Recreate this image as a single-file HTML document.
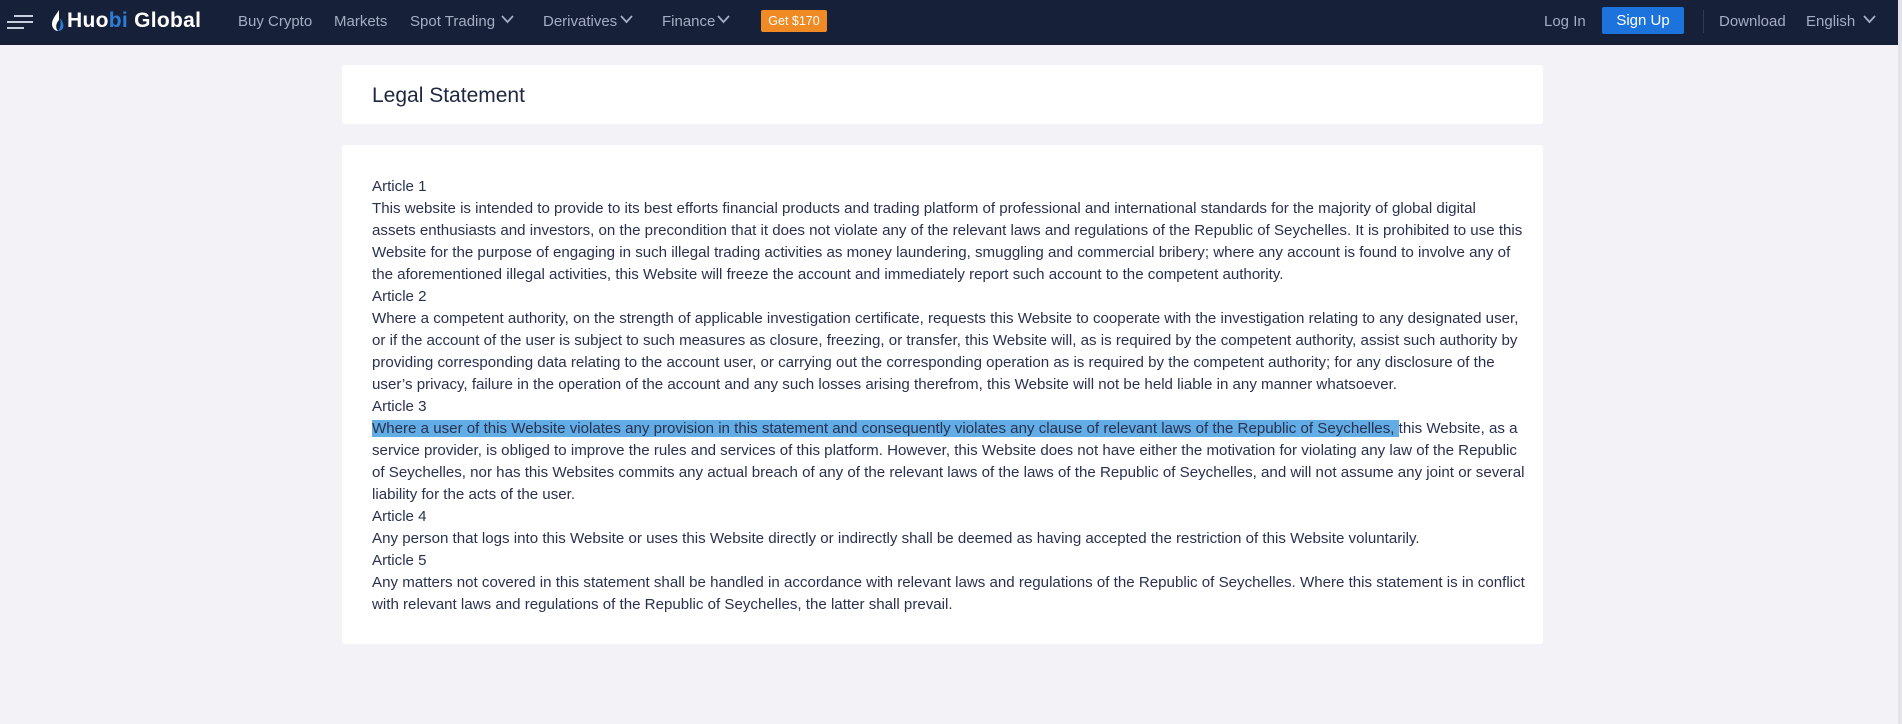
<!DOCTYPE html>
<html><head><meta charset="utf-8"><style>
*{margin:0;padding:0;box-sizing:border-box}
body{width:1902px;height:724px;background:#f2f2f7;font-family:"Liberation Sans",Arial,sans-serif;position:relative;overflow:hidden}
.nav{position:absolute;left:0;top:0;width:1898px;height:45px;background:#172039}
.sb{position:absolute;right:0;top:0;width:4px;height:724px;background:#e4e4e8}
.n{position:absolute;top:13px;font-size:15px;color:#a4adc2;white-space:nowrap}
.chev{position:absolute;top:15px}
.card{position:absolute;left:342px;width:1201px;background:#fff;border-radius:3px}
.t{position:absolute;left:372px;top:84px;font-size:21px;color:#1f2640}
.body{position:absolute;left:372px;top:176px;font-size:15.1px;line-height:22px;color:#2a3150;white-space:nowrap}
.hl{background:#62ade6}
</style></head><body>
<div class="nav">
 <svg style="position:absolute;left:6px;top:14px" width="28" height="16"><g stroke="#c8d0e0" stroke-width="2"><line x1="8" y1="2" x2="27" y2="2"/><line x1="1" y1="8" x2="27" y2="8"/><line x1="1" y1="14" x2="18" y2="14"/></g></svg>
 <svg style="position:absolute;left:51px;top:10px" width="14" height="22"><path d="M8 0 C5 5 1 9 1 14 C1 18 4 21 7 21 C4 18 5 13 8 10 Z" fill="#fff"/><path d="M9 8 C12 12 13 15 12 18 C11 20 9 21 7 21 C10 18 10 13 9 8Z" fill="#2b7ed8"/></svg>
 <div class="n" style="left:67px;top:9px;font-size:21px;font-weight:bold;color:#fff;letter-spacing:0.3px">Huo<span style="color:#2b7ed8">bi</span> Global</div>
 <div class="n" style="left:238px">Buy Crypto</div>
 <div class="n" style="left:334px">Markets</div>
 <div class="n" style="left:410px">Spot Trading</div>
 <svg class="chev" style="left:501px" width="13" height="9"><path d="M1 1 L6.5 7 L12 1" stroke="#a4adc2" stroke-width="1.8" fill="none"/></svg>
 <div class="n" style="left:543px">Derivatives</div>
 <svg class="chev" style="left:620px" width="13" height="9"><path d="M1 1 L6.5 7 L12 1" stroke="#a4adc2" stroke-width="1.8" fill="none"/></svg>
 <div class="n" style="left:662px">Finance</div>
 <svg class="chev" style="left:717px" width="13" height="9"><path d="M1 1 L6.5 7 L12 1" stroke="#a4adc2" stroke-width="1.8" fill="none"/></svg>
 <div style="position:absolute;left:761px;top:10px;width:66px;height:22px;background:#f08a24;border-radius:2px;color:#fff;font-size:12.5px;text-align:center;line-height:22px">Get $170</div>
 <div class="n" style="left:1544px">Log In</div>
 <div style="position:absolute;left:1602px;top:7px;width:82px;height:27px;background:#1d73dc;border-radius:2px;color:#fff;font-size:15px;text-align:center;line-height:27px">Sign Up</div>
 <div style="position:absolute;left:1703px;top:10px;width:1px;height:23px;background:#2f3a55"></div>
 <div class="n" style="left:1719px">Download</div>
 <div class="n" style="left:1806px">English</div>
 <svg class="chev" style="left:1863px" width="13" height="9"><path d="M1 1 L6.5 7 L12 1" stroke="#a4adc2" stroke-width="1.8" fill="none"/></svg>
</div>
<div class="sb"></div>
<div class="card" style="top:65px;height:59px"></div>
<div class="t">Legal Statement</div>
<div class="card" style="top:145px;height:499px"></div>
<div class="body">
Article 1<br>
This website is intended to provide to its best efforts financial products and trading platform of professional and international standards for the majority of global digital<br>
assets enthusiasts and investors, on the precondition that it does not violate any of the relevant laws and regulations of the Republic of Seychelles. It is prohibited to use this<br>
Website for the purpose of engaging in such illegal trading activities as money laundering, smuggling and commercial bribery; where any account is found to involve any of<br>
the aforementioned illegal activities, this Website will freeze the account and immediately report such account to the competent authority.<br>
Article 2<br>
Where a competent authority, on the strength of applicable investigation certificate, requests this Website to cooperate with the investigation relating to any designated user,<br>
or if the account of the user is subject to such measures as closure, freezing, or transfer, this Website will, as is required by the competent authority, assist such authority by<br>
providing corresponding data relating to the account user, or carrying out the corresponding operation as is required by the competent authority; for any disclosure of the<br>
user’s privacy, failure in the operation of the account and any such losses arising therefrom, this Website will not be held liable in any manner whatsoever.<br>
Article 3<br>
<span class="hl">Where a user of this Website violates any provision in this statement and consequently violates any clause of relevant laws of the Republic of Seychelles, </span>this Website, as a<br>
service provider, is obliged to improve the rules and services of this platform. However, this Website does not have either the motivation for violating any law of the Republic<br>
of Seychelles, nor has this Websites commits any actual breach of any of the relevant laws of the laws of the Republic of Seychelles, and will not assume any joint or several<br>
liability for the acts of the user.<br>
Article 4<br>
Any person that logs into this Website or uses this Website directly or indirectly shall be deemed as having accepted the restriction of this Website voluntarily.<br>
Article 5<br>
Any matters not covered in this statement shall be handled in accordance with relevant laws and regulations of the Republic of Seychelles. Where this statement is in conflict<br>
with relevant laws and regulations of the Republic of Seychelles, the latter shall prevail.
</div>
</body></html>
